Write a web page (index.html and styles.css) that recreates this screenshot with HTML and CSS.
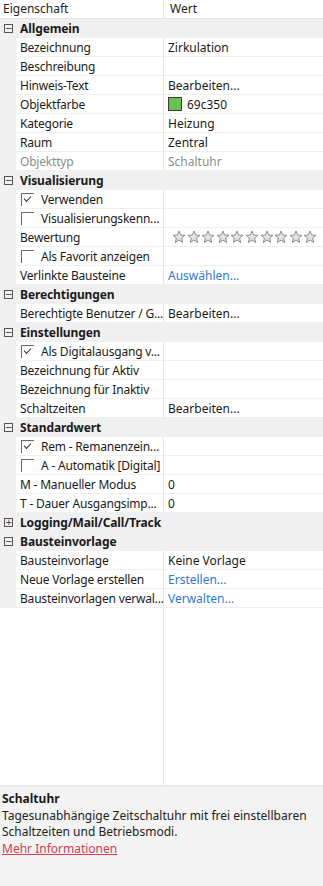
FILE: index.html
```html
<!DOCTYPE html>
<html lang="de">
<head>
<meta charset="utf-8">
<title>Eigenschaften</title>
<link rel="stylesheet" href="styles.css">
</head>
<body>
<div class="panel">
  <div class="grid">
    <div class="head">
      <div class="hname">Eigenschaft</div>
      <div class="hval">Wert</div>
    </div>

    <div class="cat"><span class="tog">−</span><span class="ctext">Allgemein</span></div>
    <div class="row"><div class="gut"></div><div class="name">Bezeichnung</div><div class="val">Zirkulation</div></div>
    <div class="row"><div class="gut"></div><div class="name">Beschreibung</div><div class="val"></div></div>
    <div class="row"><div class="gut"></div><div class="name">Hinweis-Text</div><div class="val">Bearbeiten...</div></div>
    <div class="row"><div class="gut"></div><div class="name">Objektfarbe</div><div class="val"><span class="swatch"></span>69c350</div></div>
    <div class="row"><div class="gut"></div><div class="name">Kategorie</div><div class="val">Heizung</div></div>
    <div class="row"><div class="gut"></div><div class="name">Raum</div><div class="val">Zentral</div></div>
    <div class="row dis"><div class="gut"></div><div class="name">Objekttyp</div><div class="val">Schaltuhr</div></div>

    <div class="cat"><span class="tog">−</span><span class="ctext">Visualisierung</span></div>
    <div class="row"><div class="gut"></div><div class="name chk"><span class="box on"></span>Verwenden</div><div class="val"></div></div>
    <div class="row"><div class="gut"></div><div class="name chk"><span class="box"></span>Visualisierungskenn...</div><div class="val"></div></div>
    <div class="row"><div class="gut"></div><div class="name">Bewertung</div><div class="val stars" id="stars"></div></div>
    <div class="row"><div class="gut"></div><div class="name chk"><span class="box"></span>Als Favorit anzeigen</div><div class="val"></div></div>
    <div class="row"><div class="gut"></div><div class="name">Verlinkte Bausteine</div><div class="val link">Auswählen...</div></div>

    <div class="cat"><span class="tog">−</span><span class="ctext">Berechtigungen</span></div>
    <div class="row"><div class="gut"></div><div class="name">Berechtigte Benutzer / G...</div><div class="val">Bearbeiten...</div></div>

    <div class="cat"><span class="tog">−</span><span class="ctext">Einstellungen</span></div>
    <div class="row"><div class="gut"></div><div class="name chk"><span class="box on"></span>Als Digitalausgang v...</div><div class="val"></div></div>
    <div class="row"><div class="gut"></div><div class="name">Bezeichnung für Aktiv</div><div class="val"></div></div>
    <div class="row"><div class="gut"></div><div class="name">Bezeichnung für Inaktiv</div><div class="val"></div></div>
    <div class="row"><div class="gut"></div><div class="name">Schaltzeiten</div><div class="val">Bearbeiten...</div></div>

    <div class="cat"><span class="tog">−</span><span class="ctext">Standardwert</span></div>
    <div class="row"><div class="gut"></div><div class="name chk"><span class="box on"></span>Rem - Remanenzein...</div><div class="val"></div></div>
    <div class="row"><div class="gut"></div><div class="name chk"><span class="box"></span>A - Automatik [Digital]</div><div class="val"></div></div>
    <div class="row"><div class="gut"></div><div class="name">M - Manueller Modus</div><div class="val">0</div></div>
    <div class="row"><div class="gut"></div><div class="name">T - Dauer Ausgangsimp...</div><div class="val">0</div></div>

    <div class="cat"><span class="tog">+</span><span class="ctext">Logging/Mail/Call/Track</span></div>

    <div class="cat"><span class="tog">−</span><span class="ctext">Bausteinvorlage</span></div>
    <div class="row"><div class="gut"></div><div class="name">Bausteinvorlage</div><div class="val">Keine Vorlage</div></div>
    <div class="row"><div class="gut"></div><div class="name">Neue Vorlage erstellen</div><div class="val link">Erstellen...</div></div>
    <div class="row"><div class="gut"></div><div class="name">Bausteinvorlagen verwal...</div><div class="val link">Verwalten...</div></div>

    <div class="filler"><div class="fl"></div><div class="fr"></div></div>
  </div>
  <div class="desc">
    <div class="dtitle">Schaltuhr</div>
    <div class="dtext">Tagesunabhängige Zeitschaltuhr mit frei einstellbaren Schaltzeiten und Betriebsmodi.</div>
    <a class="dlink" href="#">Mehr Informationen</a>
  </div>
</div>
<script>
(function(){
  var s = document.getElementById('stars');
  var star = '<svg class="star" viewBox="0 0 14 14" width="14" height="14"><defs><linearGradient id="g" x1="0" y1="0" x2="0" y2="1"><stop offset="0" stop-color="#f4f4f4"/><stop offset="1" stop-color="#d6d6d6"/></linearGradient></defs><polygon points="7,1 8.6,5.1 13,5.3 9.6,8.1 10.7,12.5 7,10.1 3.3,12.5 4.4,8.1 1,5.3 5.4,5.1" fill="url(#g)" stroke="#8f8f8f" stroke-width="1" stroke-linejoin="round"/></svg>';
  var h = '';
  for (var i = 0; i < 10; i++) h += star;
  s.innerHTML = h;
})();
</script>
</body>
</html>
```
FILE: styles.css
```css
* { box-sizing: border-box; }
html, body { margin: 0; padding: 0; }
body {
  width: 323px;
  height: 886px;
  font-family: "Noto Sans", "Open Sans", sans-serif;
  font-size: 12px;
  color: #1a1a1a;
  background: #ffffff;
  overflow: hidden;
}
.panel {
  display: flex;
  flex-direction: column;
  height: 886px;
}
.grid {
  flex: 1;
  display: flex;
  flex-direction: column;
  background: #fff;
}
.head {
  display: flex;
  height: 19px;
  border-bottom: 1px solid #e5e5e5;
  line-height: 18px;
  color: #222;
}
.hname {
  width: 164px;
  padding-left: 3px;
  border-right: 1px solid #e5e5e5;
}
.hval {
  flex: 1;
  padding-left: 6px;
}
.cat {
  display: flex;
  align-items: center;
  height: 19px;
  line-height: 19px;
  background: #f0f0f0;
  font-weight: bold;
  letter-spacing: -0.1px;
}
.tog {
  width: 9px;
  height: 9px;
  margin-left: 4px;
  margin-right: 7px;
  border: 1px solid #555;
  font-size: 9px;
  line-height: 7px;
  text-align: center;
  font-weight: normal;
  color: #333;
  font-family: "DejaVu Sans", sans-serif;
  overflow: hidden;
}
.row {
  display: flex;
  height: 19px;
  line-height: 19px;
}
.gut {
  width: 16px;
  background: #f0f0f0;
}
.name {
  width: 148px;
  padding-left: 4px;
  border-right: 1px solid #e5e5e5;
  border-bottom: 1px solid #f0f0f0;
  white-space: nowrap;
  letter-spacing: -0.2px;
}
.val {
  flex: 1;
  padding-left: 4px;
  border-bottom: 1px solid #f0f0f0;
  white-space: nowrap;
  display: flex;
  align-items: center;
}
.dis .name, .dis .val { color: #8c8c8c; }
.link { color: #2f7ad6; }
.swatch {
  width: 14px;
  height: 14px;
  background: #69c350;
  border: 1px solid #3a3a3a;
  margin-right: 5px;
}
.chk {
  display: flex;
  align-items: center;
}
.box {
  width: 13px;
  height: 13px;
  border-left: 1px solid #6a6a6a;
  border-top: 1px solid #6a6a6a;
  margin-left: 1px;
  margin-right: 7px;
  position: relative;
}
.box.on::after {
  content: "";
  position: absolute;
  left: 2px;
  top: 2px;
  width: 6px;
  height: 3px;
  border-left: 1px solid #333;
  border-bottom: 1px solid #333;
  transform: rotate(-45deg);
}
.stars {
  padding-left: 8px;
  gap: 0.6px;
}
.star { flex: none; }
.filler {
  flex: 1;
  display: flex;
  border-bottom: 2px solid #e8e8e8;
}
.fl {
  width: 164px;
  border-right: 1px solid #e5e5e5;
}
.fr { flex: 1; }
.desc {
  height: 99px;
  background: #f3f3f3;
  padding: 4px 2px 0 2px;
  line-height: 16.5px;
}
.dtitle { font-weight: bold; }
.dtext { color: #222; }
.dlink {
  color: #d23c55;
  text-decoration: underline;
}
```
